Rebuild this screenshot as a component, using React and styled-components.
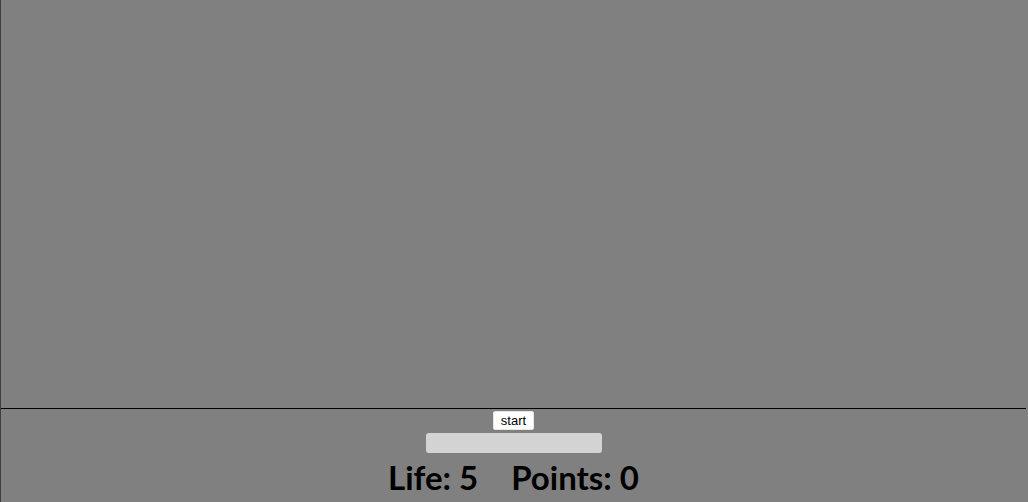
import React from 'react';
import styled, { createGlobalStyle } from 'styled-components';

const GlobalStyle = createGlobalStyle`
    html, body {
        margin: 0;
        padding: 0;
        background: #808080;
        height: 100%;
        overflow: hidden;
    }
`

const Page = styled.div`
    width: 1026px;
    height: 502px;
    border-left: 1px solid #3a3d42;
    box-sizing: border-box;
    display: flex;
    flex-direction: column;
    align-items: center;
`

const Field = styled.div`
    align-self: stretch;
    height: 409px;
    border-bottom: 1px solid #000;
    box-sizing: border-box;
`

const StartButton = styled.button`
    margin-top: 2px;
    height: 19px;
    width: 41px;
    padding: 0;
    background: #fff;
    border: 1px solid #e6e6e6;
    border-radius: 2px;
    font-family: "Liberation Sans", Arial, sans-serif;
    font-size: 13px;
    color: #000;
`

const Bar = styled.div`
    margin-top: 3px;
    width: 176px;
    height: 20px;
    background: #d3d3d3;
    border-radius: 3px;
`

const Stats = styled.div`
    display: flex;
    gap: 33px;
    margin-top: 2px;
    font-family: Lato, "Open Sans", sans-serif;
    font-weight: 700;
    font-size: 33px;
    line-height: 44px;
    color: #000;
`

export default function App() {
    const life = 5;
    const points = 0;

    return (
        <>
            <GlobalStyle />
            <Page>
                <Field />
                <StartButton>start</StartButton>
                <Bar />
                <Stats>
                    <span>Life: {life}</span>
                    <span>Points: {points}</span>
                </Stats>
            </Page>
        </>
    );
}
